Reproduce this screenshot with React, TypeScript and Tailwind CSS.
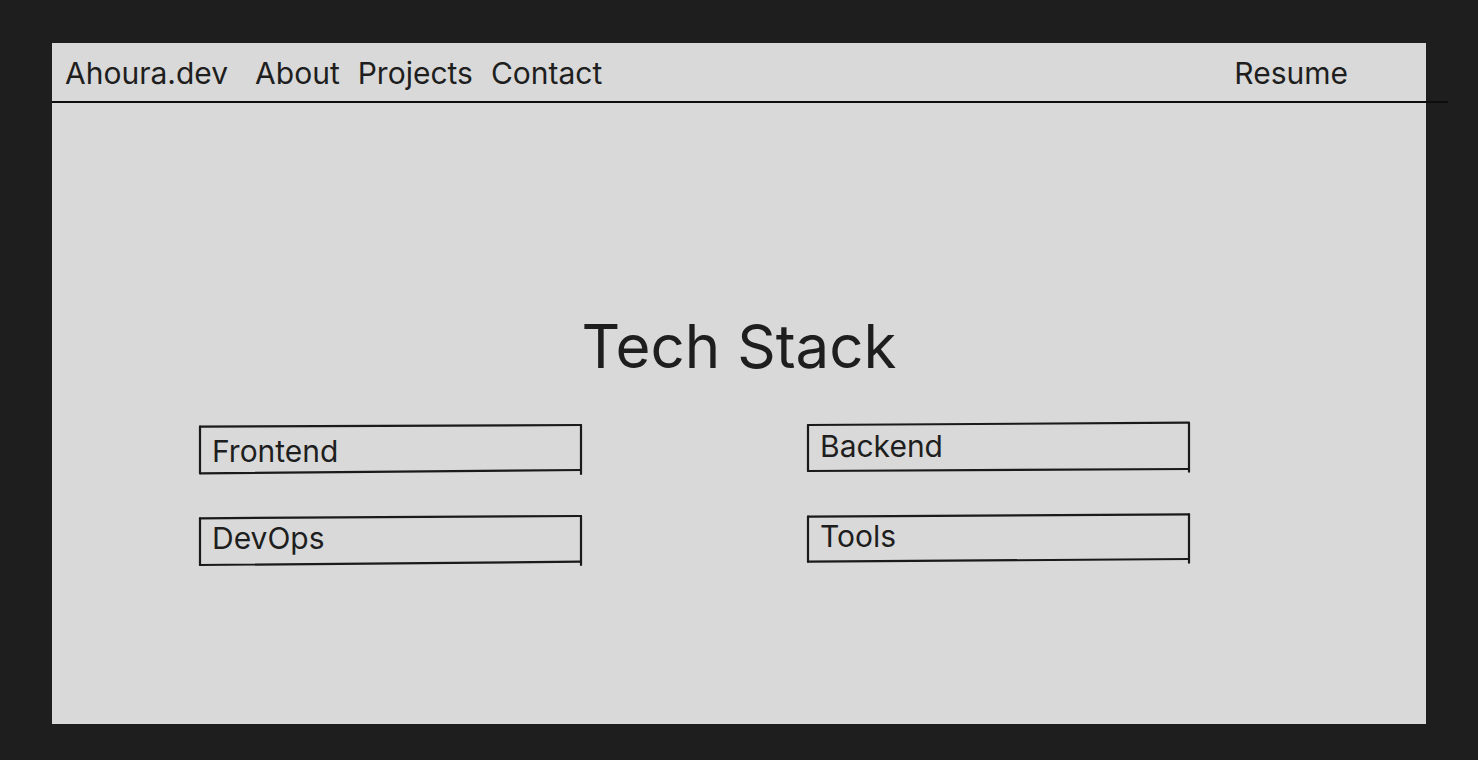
import React from "react";

type BoxProps = {
  label: string;
  tl: number;
  tr: number;
  bl: number;
  br: number;
  rTop: number;
  rBot: number;
  pt: string;
};

function SketchBox({ label, tl, tr, bl, br, rTop, rBot, pt }: BoxProps) {
  return (
    <div className="relative w-[383px] h-[53px]">
      <svg
        className="absolute inset-0 overflow-visible"
        width="383"
        height="53"
        viewBox="0 0 383 53"
        fill="none"
        stroke="#1a1a1a"
        strokeWidth="2.2"
        strokeLinecap="round"
      >
        <line x1="1" y1={tl} x2="382" y2={tr} />
        <line x1="1" y1={tl} x2="1" y2={bl} />
        <line x1="1" y1={bl} x2="382" y2={br} />
        <line x1="382" y1={rTop} x2="382" y2={rBot} />
      </svg>
      <div className={`relative pl-[13px] text-[30px] leading-none text-[#1e1e1e] ${pt}`}>{label}</div>
    </div>
  );
}

export default function App() {
  return (
    <div
      className="w-full h-screen bg-[#1e1e1e] overflow-hidden pt-[43px] pl-[52px]"
      style={{ fontFamily: "Inter, 'Noto Sans', sans-serif" }}
    >
      <div className="w-[1374px] h-[681px] bg-[#d9d9d9] flex flex-col">
        <div className="h-[58px] flex items-start pt-[15px] pl-[13px] pr-[78px] text-[30px] leading-none text-[#1e1e1e]">
          <span>Ahoura.dev</span>
          <span className="ml-[27px]">About</span>
          <span className="ml-[18px]">Projects</span>
          <span className="ml-[18px]">Contact</span>
          <span className="ml-auto">Resume</span>
        </div>
        <div className="w-[1396px] h-[2px] bg-[#0d0d0d]" />
        <h1 className="mt-[213px] text-center text-[60px] leading-none text-[#1e1e1e]">Tech Stack</h1>
        <div className="mt-[46px] ml-[147px] grid grid-cols-[383px_383px] gap-x-[225px] gap-y-[39px]">
          <SketchBox label="Frontend" tl={4.7} tr={3} bl={51.3} br={48} rTop={3} rBot={52} pt="pt-[14px]" />
          <SketchBox label="Backend" tl={3} tr={0.7} bl={49} br={47} rTop={1} rBot={49.7} pt="pt-[9px]" />
          <SketchBox label="DevOps" tl={4.3} tr={2} bl={51} br={47.7} rTop={2} rBot={51} pt="pt-[9px]" />
          <SketchBox label="Tools" tl={2.7} tr={0.3} bl={47.7} br={45} rTop={0.3} rBot={48.7} pt="pt-[7px]" />
        </div>
      </div>
    </div>
  );
}
